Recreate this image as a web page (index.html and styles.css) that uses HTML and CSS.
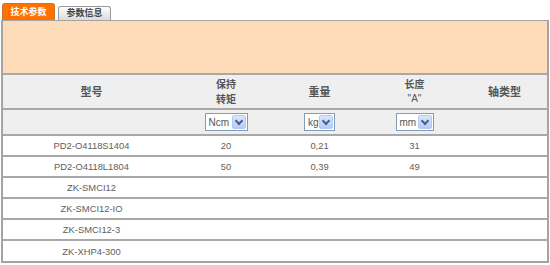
FILE: index.html
```html
<!DOCTYPE html>
<html>
    <head>
        <meta charset="UTF-8">
        <title>技术参数</title>
        <link rel="stylesheet" href="styles.css">
    </head>
    <body>
        <div class="tabs">
            <div class="tab active">技术参数</div>
            <div class="tab">参数信息</div>
        </div>
        <div class="panel">
            <div class="intro"></div>
            <table class="spec">
                <colgroup>
                    <col class="c-model">
                    <col class="c-torque">
                    <col class="c-weight">
                    <col class="c-length">
                    <col class="c-shaft">
                </colgroup>
                <tr class="head">
                    <th>型号</th>
                    <th class="two"><span class="line">保持</span><span class="line">转矩</span></th>
                    <th>重量</th>
                    <th class="two"><span class="line">长度</span><span class="line quote">"A"</span></th>
                    <th>轴类型</th>
                </tr>
                <tr class="units">
                    <td></td>
                    <td><span class="pick w-ncm">Ncm<i class="btn"></i></span></td>
                    <td><span class="pick w-kg">kg<i class="btn"></i></span></td>
                    <td><span class="pick w-mm">mm<i class="btn"></i></span></td>
                    <td></td>
                </tr>
                <tr>
                    <td>PD2-O4118S1404</td>
                    <td>20</td>
                    <td>0,21</td>
                    <td>31</td>
                    <td></td>
                </tr>
                <tr>
                    <td>PD2-O4118L1804</td>
                    <td>50</td>
                    <td>0,39</td>
                    <td>49</td>
                    <td></td>
                </tr>
                <tr>
                    <td>ZK-SMCI12</td>
                    <td></td><td></td><td></td><td></td>
                </tr>
                <tr>
                    <td>ZK-SMCI12-IO</td>
                    <td></td><td></td><td></td><td></td>
                </tr>
                <tr>
                    <td>ZK-SMCI12-3</td>
                    <td></td><td></td><td></td><td></td>
                </tr>
                <tr>
                    <td>ZK-XHP4-300</td>
                    <td></td><td></td><td></td><td></td>
                </tr>
            </table>
        </div>
    </body>
</html>
```

FILE: styles.css
```css
*{
    margin: 0;
    padding: 0;
    box-sizing: border-box;
}
body{
    width: 550px;
    padding: 0 1px 0 1px;
    font-family: "Liberation Sans", Arial, "Noto Sans CJK SC", sans-serif;
    color: #555;
    background: #fff;
}

/* tab strip */
.tabs{
    display: flex;
    align-items: flex-end;
    height: 20px;
    padding-left: 1px;
    gap: 3px;
}
.tab{
    width: 53px;
    height: 14px;
    line-height: 12px;
    border: 1px solid #9a9a9a;
    border-bottom: 0;
    border-radius: 3px 3px 0 0;
    background: linear-gradient(#fefefe, #dcdcdc);
    font-size: 9px;
    font-weight: bold;
    color: #444;
    text-align: center;
}
.tab.active{
    height: 17px;
    line-height: 16px;
    border-color: #c8742a;
    background: #ff7200;
    color: #fff;
}

/* panel */
.panel{
    border: 2px solid #a4a4a4;
    border-top-width: 1px;
    width: 548px;
}
.intro{
    height: 52px;
    background: #fedbb9;
}

.spec{
    width: 100%;
    border-collapse: collapse;
    table-layout: fixed;
}
.c-model{ width: 177px; }
.c-torque{ width: 92px; }
.c-weight{ width: 95px; }
.c-length{ width: 95px; }
.c-shaft{ width: 85px; }

.spec th,
.spec td{
    border-top: 2px solid #a8a8a8;
    text-align: center;
    vertical-align: middle;
}
.spec th{
    height: 35px;
    background: #efefef;
    font-size: 11px;
    line-height: 13px;
    font-weight: bold;
    color: #555;
    font-family: "Noto Sans CJK SC", "Liberation Sans", sans-serif;
}
.spec th.two{
    font-size: 10px;
}
.spec th .line{
    display: block;
    line-height: 14.5px;
}
.spec th .quote{
    font-family: "Liberation Sans", Arial, sans-serif;
    font-size: 10px;
    font-weight: normal;
}
.spec td{
    height: 21px;
    font-size: 9.4px;
    color: #5e5e5e;
}
.spec .units td{
    height: 26px;
    background: #efefef;
}

/* unit dropdowns */
.pick{
    display: inline-flex;
    align-items: center;
    justify-content: space-between;
    height: 18px;
    padding: 1px 1px 1px 3px;
    border: 1px solid #7f9db9;
    background: #fff;
    font-size: 10px;
    color: #555;
    vertical-align: middle;
}
.w-ncm{ width: 43px; }
.w-kg{ width: 31px; }
.w-mm{ width: 38px; }
.pick .btn{
    position: relative;
    width: 14px;
    height: 14px;
    border: 1px solid #b7c9f5;
    border-radius: 2px;
    background: linear-gradient(#dbe6ff, #b5cbf7);
}
.pick .btn::after{
    content: "";
    position: absolute;
    left: 3px;
    top: 2px;
    width: 4px;
    height: 4px;
    border-right: 2px solid #4d6185;
    border-bottom: 2px solid #4d6185;
    transform: rotate(45deg);
}
```
